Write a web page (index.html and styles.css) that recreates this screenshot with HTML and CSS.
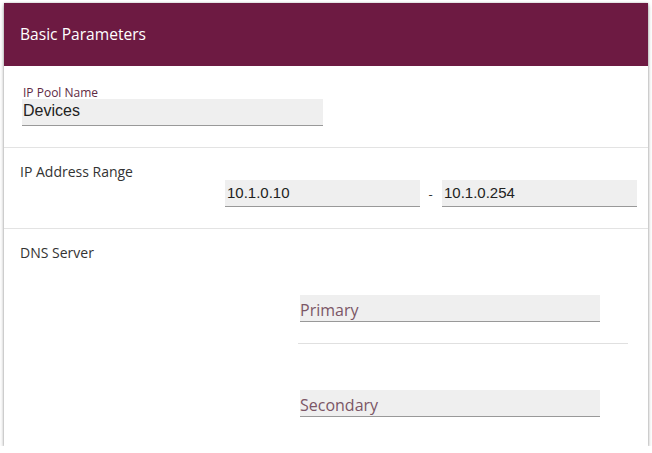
FILE: index.html
```html
<!DOCTYPE html>
<html>
<head>
<meta charset="utf-8">
<link rel="stylesheet" href="styles.css">
</head>
<body>
<div class="card">
  <div class="card-header">Basic Parameters</div>
  <div class="section section-pool">
    <div class="field-label">IP Pool Name</div>
    <div class="input input-pool">Devices</div>
  </div>
  <div class="section section-range">
    <div class="section-title">IP Address Range</div>
    <div class="range-row">
      <div class="input input-range">10.1.0.10</div>
      <span class="dash">-</span>
      <div class="input input-range">10.1.0.254</div>
    </div>
  </div>
  <div class="section section-dns">
    <div class="section-title">DNS Server</div>
    <div class="dns-list">
      <div class="dns-item">
        <div class="input input-dns placeholder">Primary</div>
      </div>
      <div class="dns-item last">
        <div class="input input-dns placeholder">Secondary</div>
      </div>
    </div>
  </div>
</div>
</body>
</html>
```
FILE: styles.css
```css
html, body {
  margin: 0;
  padding: 0;
  background: #ffffff;
  overflow: hidden;
}
body {
  font-family: "Open Sans", "Liberation Sans", sans-serif;
  color: #333;
}
.card {
  margin: 3px 4px 0 4px;
  width: 644px;
  height: calc(100vh - 10px);
  background: #fff;
  box-shadow: 0 2px 4px rgba(0,0,0,0.35), 0 0 2px rgba(0,0,0,0.2);
  display: flex;
  flex-direction: column;
}
.card-header {
  height: 63px;
  flex: none;
  background: #6d1a42;
  color: #fff;
  font-size: 15.6px;
  line-height: 63px;
  padding-left: 16px;
  box-sizing: border-box;
}
.section {
  border-bottom: 1px solid #e3e3e3;
  box-sizing: border-box;
  flex: none;
}
.section-pool {
  height: 82px;
  padding: 20px 0 0 18px;
}
.field-label {
  font-size: 12px;
  line-height: 13px;
  color: #5e2a43;
  padding-left: 1px;
}
.input {
  background: #efefef;
  border-bottom: 1px solid #999;
  box-sizing: border-box;
  font-family: "Liberation Sans", Arial, sans-serif;
  color: #222;
}
.input-pool {
  width: 301px;
  height: 27px;
  font-size: 16px;
  line-height: 24px;
  padding-left: 1px;
}
.section-range {
  height: 81px;
  padding: 14px 0 0 16px;
}
.section-title {
  font-size: 14px;
  line-height: 19px;
  color: #333;
}
.range-row {
  display: flex;
  align-items: center;
  margin: -1px 0 0 205px;
}
.input-range {
  width: 195px;
  height: 27px;
  font-size: 15px;
  line-height: 26px;
  padding-left: 2px;
}
.dash {
  width: 22px;
  text-align: center;
  font-size: 13px;
  color: #333;
  padding-right: 1px;
  box-sizing: border-box;
}
.section-dns {
  flex: 1 1 auto;
  min-height: 0;
  border-bottom: none;
  padding: 14px 0 0 16px;
}
.dns-list {
  margin: 29px 0 0 278px;
  width: 330px;
}
.dns-item {
  padding: 4px 0 21px 2px;
  border-bottom: 1px solid #e0e0e0;
}
.dns-item.last {
  border-bottom: none;
  padding-top: 46px;
}
.input-dns {
  width: 300px;
  height: 27px;
  font-family: "Open Sans", sans-serif;
  font-size: 16px;
  line-height: 30px;
  color: #7b5666;
}
```
